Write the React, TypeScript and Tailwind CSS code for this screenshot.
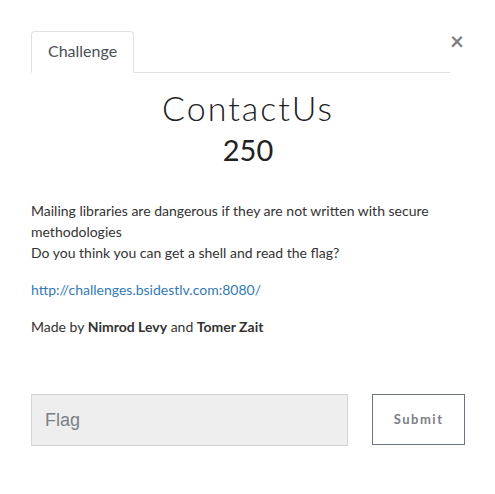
import React from 'react';

const lato = "font-['Lato','Noto_Sans',sans-serif]";

const App: React.FC = () => {
  return (
    <div className={`w-[495px] h-[494px] bg-white pl-[31px] pr-[30px] pt-[31px] ${lato} text-[#333]`}>
      {/* Tabs + close */}
      <div className="flex items-start">
        <div className="flex w-[419px] border-b border-[#dee2e6]">
          <div className="-mb-px px-4 pt-[7px] pb-[9px] text-[16px] leading-6 text-[#495057] bg-white border border-[#dee2e6] border-b-white rounded-t-[4px]">
            Challenge
          </div>
        </div>
        <button className="ml-auto -mt-[2px] mr-[1px] text-[24px] leading-6 font-bold text-black opacity-50">
          ×
        </button>
      </div>

      {/* Name and value */}
      <h3 className="mt-[15px] text-center text-[34px] leading-[40px] font-light tracking-[2px] text-[#222]">
        ContactUs
      </h3>
      <h4 className="mt-[5px] text-center text-[29px] leading-[34px] font-normal text-[#222]">250</h4>

      {/* Description */}
      <div className="mt-[33px] text-[14px] leading-[21px]">
        <p>
          Mailing libraries are dangerous if they are not written with secure methodologies
          <br />
          Do you think you can get a shell and read the flag?
        </p>
        <p className="mt-4">
          <a className="text-[#337ab7]">http://challenges.bsidestlv.com:8080/</a>
        </p>
        <p className="mt-4">
          Made by <b>Nimrod Levy</b> and <b>Tomer Zait</b>
        </p>
      </div>

      {/* Flag form */}
      <div className="mt-[57px] flex items-start gap-6">
        <input
          className="w-[318px] h-[52px] bg-[#eeeeee] border border-[#d4d4d8] px-[13px] text-[18px] font-['Liberation_Sans',Arial,sans-serif] placeholder:text-[#7b8088] outline-none"
          placeholder="Flag"
        />
        <button className="w-[93px] h-[51px] border border-[#6c757d] text-[13px] font-bold tracking-[1.5px] text-[#7b8088]">
          Submit
        </button>
      </div>
    </div>
  );
};

export default App;
